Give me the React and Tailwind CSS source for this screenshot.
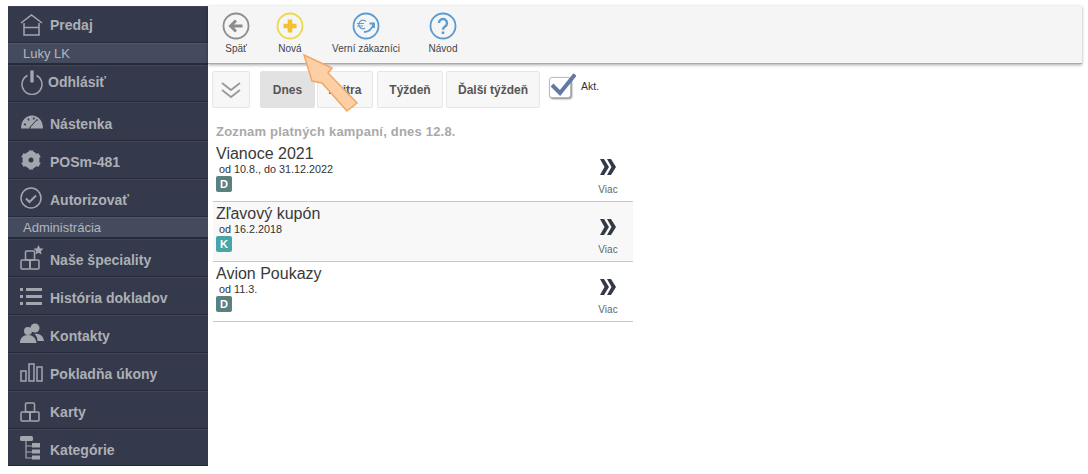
import React from 'react';

const ICON = 'w-[24px] h-[26px] flex-none text-[#a3a6ad]';

const HomeIcon = () => (
    <svg className={ICON} viewBox="0 0 24 26" fill="none" stroke="currentColor" strokeWidth="1.500">
        <path d="M1 11 11.500 3 22 11" />
        <path d="M4 11v12h15V11" />
        <path d="M4 15.500h15" />
    </svg>
);
const PowerIcon = () => (
    <svg className={ICON} viewBox="0 0 24 26" fill="none" stroke="currentColor" strokeWidth="1.500">
        <path d="M7.500 6.500a10 10 0 1 0 9 0" />
        <path d="M12 1.500v12" strokeWidth="3.400" />
    </svg>
);
const GaugeIcon = () => (
    <svg className={ICON} viewBox="0 0 24 26" fill="currentColor">
        <path d="M1 18.500C1 10.500 6 5.500 12 5.500s11 5 11 13z" />
        <path d="M4 14l2 1M8 8.500l1 2M14 7.500l-.5 2M9.500 18.500l8-9" fill="none" stroke="#343a4c" strokeWidth="1.600" />
        <path d="M11 18l6-7" fill="none" stroke="currentColor" strokeWidth="1.400" />
    </svg>
);
const GearIcon = () => (
    <svg className={ICON} viewBox="0 0 24 26">
        <circle cx="11" cy="13" r="5.500" fill="none" stroke="currentColor" strokeWidth="6" />
        <path d="M11 3.500v4M11 18.500v4M2.500 8l4 2.500M15.500 15.500l4 2.500M2.500 18l4-2.500M15.500 10.500l4-2.500" stroke="currentColor" strokeWidth="4.500" />
    </svg>
);
const CheckCircleIcon = () => (
    <svg className={ICON} viewBox="0 0 24 26" fill="none" stroke="currentColor" strokeWidth="1.500">
        <circle cx="11" cy="13" r="10" />
        <path d="M6 13.500l3.500 3.500L16 10.500" strokeWidth="2" />
    </svg>
);
const BoxesIcon = ({ star }) => (
    <svg className={ICON} viewBox="0 0 24 26" fill="none" stroke="currentColor" strokeWidth="1.500">
        <rect x="1" y="15" width="9" height="9" rx="1" />
        <rect x="10" y="15" width="9" height="9" rx="1" />
        <rect x="5.500" y="6" width="9" height="9" rx="1" />
        {star && <path d="M18.500 0l1.500 3.300 3.500.4-2.600 2.400.7 3.500-3.100-1.800-3.100 1.800.7-3.500-2.600-2.400 3.500-.4z" fill="currentColor" stroke="none" />}
    </svg>
);
const ListIcon = () => (
    <svg className={ICON} viewBox="0 0 24 26" fill="currentColor">
        <path d="M0 5h3v3H0zM0 12h3v3H0zM0 19h3v3H0zM6 5h16v3H6zM6 12h16v3H6zM6 19h16v3H6z" />
    </svg>
);
const PeopleIcon = () => (
    <svg className={ICON} viewBox="0 0 24 26" fill="currentColor">
        <circle cx="15" cy="7" r="4.500" />
        <circle cx="8" cy="10" r="4" />
        <path d="M0 22c0-5 3-8 8-8s8 3 8.500 8zM17.500 20c0-3-1-5-3-7 5-1 9 2 9.500 7z" />
    </svg>
);
const BarsIcon = () => (
    <svg className={ICON} viewBox="0 0 24 26" fill="none" stroke="currentColor" strokeWidth="1.500">
        <path d="M1 12h5v10H1zM9 5h5v17H9zM17 8h5v14h-5z" />
    </svg>
);
const TreeIcon = () => (
    <svg className={ICON} viewBox="0 0 24 26" fill="currentColor">
        <rect x="0" y="1" width="13" height="5" rx="1.500" />
        <path d="M6 6v17h6M6 11h6M6 17h6" fill="none" stroke="currentColor" strokeWidth="1.200" />
        <rect x="12" y="8" width="8" height="4.500" />
        <rect x="12" y="14.500" width="8" height="4" />
        <rect x="12" y="20.500" width="8" height="4" />
    </svg>
);

const MENU = [
    { type: 'item', label: 'Predaj', icon: <HomeIcon />, height: 'h-[37px]', textPad: 'pt-[2px]' },
    { type: 'head', label: 'Luky LK' },
    { type: 'item', label: 'Odhlásiť', icon: <PowerIcon />, height: 'h-[37px]', gap: 'gap-[4px] pb-[3px]', textPad: 'pt-0' },
    { type: 'item', label: 'Nástenka', icon: <GaugeIcon />, height: 'h-[39px]', gap: 'gap-[6px] pt-[2px]' },
    { type: 'item', label: 'POSm-481', icon: <GearIcon /> },
    { type: 'item', label: 'Autorizovať', icon: <CheckCircleIcon /> },
    { type: 'head', label: 'Administrácia' },
    { type: 'item', label: 'Naše špeciality', icon: <BoxesIcon star /> },
    { type: 'item', label: 'História dokladov', icon: <ListIcon /> },
    { type: 'item', label: 'Kontakty', icon: <PeopleIcon /> },
    { type: 'item', label: 'Pokladňa úkony', icon: <BarsIcon /> },
    { type: 'item', label: 'Karty', icon: <BoxesIcon /> },
    { type: 'item', label: 'Kategórie', icon: <TreeIcon />, height: 'h-[37px]', textPad: 'pt-[5px]' },
];

const BackIcon = () => (
    <svg className="w-[28px] h-[28px]" viewBox="0 0 28 28" fill="none">
        <circle cx="14" cy="14" r="12.500" stroke="#8d8d8d" strokeWidth="1.800" />
        <path d="M20.500 14H9M14 8.500 8.500 14l5.500 5.500" stroke="#8d8d8d" strokeWidth="3" />
    </svg>
);
const PlusIcon = () => (
    <svg className="w-[28px] h-[28px]" viewBox="0 0 28 28" fill="none">
        <circle cx="14" cy="14" r="12.500" stroke="#ecd94a" strokeWidth="1.800" />
        <path d="M14 7.500v13M7.500 14h13" stroke="#f2c230" strokeWidth="4.500" />
    </svg>
);
const EuroIcon = () => (
    <svg className="w-[28px] h-[28px]" viewBox="0 0 28 28" fill="none" stroke="#5b9bd0">
        <circle cx="14" cy="14" r="12.500" strokeWidth="1.800" />
        <path d="M14 9.500a4 4 0 0 0-6 0 5 5 0 0 0 0 6 4 4 0 0 0 5 .5M5 11.500h7M5 14h6" strokeWidth="1.200" />
        <path d="M12 20c5 0 8-3 9.500-8M17.500 11.500h4.500v4.500" strokeWidth="1.800" />
    </svg>
);
const HelpIcon = () => (
    <svg className="w-[28px] h-[28px]" viewBox="0 0 28 28" fill="none">
        <circle cx="14" cy="14" r="12.500" stroke="#5b9bd0" strokeWidth="1.800" />
        <path d="M10 11a4 4 0 1 1 6 3.500c-1.500 1-2 1.500-2 3.200" stroke="#5b9bd0" strokeWidth="2.400" />
        <path d="M14 19.500v2.500" stroke="#5b9bd0" strokeWidth="2.600" />
    </svg>
);

const TOOLS = [
    { label: 'Späť', icon: <BackIcon />, width: 'w-[56px]' },
    { label: 'Nová', icon: <PlusIcon />, width: 'w-[52px]' },
    { label: 'Verní zákazníci', icon: <EuroIcon />, width: 'w-[100px]' },
    { label: 'Návod', icon: <HelpIcon />, width: 'w-[54px]' },
];

const CAMPAIGNS = [
    { name: 'Vianoce 2021', dates: 'od 10.8., do 31.12.2022', tag: 'D', tagColor: 'bg-[#5a8080]', bg: 'bg-white' },
    { name: 'Zľavový kupón', dates: 'od 16.2.2018', tag: 'K', tagColor: 'bg-[#46a6a6]', bg: 'bg-[#f8f8f8]' },
    { name: 'Avion Poukazy', dates: 'od 11.3.', tag: 'D', tagColor: 'bg-[#5a8080]', bg: 'bg-white' },
];

function MenuRow({ item }) {
    if (item.type === 'head') {
        return (
            <div className="h-[22px] pl-[15px] flex items-center bg-[#454b5e] border-t border-[#525869] border-b-2 border-b-[#272b39] text-[13px] text-[#b4b6bc]">
                {item.label}
            </div>
        );
    }
    return (
        <div className={`${item.height ?? 'h-[38px]'} pl-[12px] flex items-center ${item.gap ?? 'gap-[6px]'} bg-[#343a4c] border-b border-[#272b39] border-t border-t-[#404658] text-[14px] font-bold text-[#adafb5]`}>
            {item.icon}
            <span className={item.textPad ?? 'pt-[4px]'}>{item.label}</span>
        </div>
    );
}

function Tab({ label, active, className }) {
    return (
        <div className={`h-[37px] ${className} flex items-center justify-center rounded-[2px] border text-[12px] font-bold text-[#555] ${active ? 'bg-[#e2e2e2] border-[#e2e2e2]' : 'bg-[#f7f7f7] border-[#e6e6e6]'}`}>
            {label}
        </div>
    );
}

function CampaignRow({ campaign }) {
    return (
        <div className={`h-[60px] flex justify-between pl-[3px] border-b border-[#c8c8c8] ${campaign.bg}`}>
            <div>
                <div className="h-[19px] pt-[2px] text-[16px] leading-[19px] text-[#3a3a3a]">{campaign.name}</div>
                <div className="mt-[1px] pl-[3px] text-[10.800px] leading-[14px] text-[#333]">{campaign.dates}</div>
                <div className={`w-[16px] h-[16px] rounded-[2px] flex items-center justify-center text-[11px] font-bold text-white ${campaign.tagColor}`}>
                    {campaign.tag}
                </div>
            </div>
            <div className="w-[50px] flex flex-col items-center pt-[17px]">
                <svg className="w-[16px] h-[16px] flex-none" viewBox="0 0 16 16" fill="#333a46">
                    <path d="M0 0h4l5 8-5 8H0l4.500-8zM7 0h4l5 8-5 8H7l4.500-8z" />
                </svg>
                <div className="mt-[9px] text-[10px] leading-[12px] text-[#666]">Viac</div>
            </div>
        </div>
    );
}

export default function App() {
    return (
        <div className="relative w-[1088px] h-[474px] overflow-hidden bg-white pt-[6px] pl-[8px] font-['Liberation_Sans',Arial,sans-serif]">
            <div className="flex h-[460px]">
                {/* Sidebar */}
                <div className="w-[200px] flex-none bg-[#343a4c]">
                    {MENU.map(item => <MenuRow key={item.label} item={item} />)}
                </div>

                {/* Main */}
                <div className="flex-1 min-w-0">
                    <div className="h-[58px] bg-[#f5f5f5] border-b border-[#aaa] shadow-[0_1px_3px_rgba(0,0,0,0.35)] flex pt-[6px] w-[874px]">
                        {TOOLS.map(tool => (
                            <div key={tool.label} className={`${tool.width} flex flex-col items-center`}>
                                {tool.icon}
                                <div className="mt-[3px] text-[10px] leading-[12px] text-[#444]">{tool.label}</div>
                            </div>
                        ))}
                    </div>

                    <div className="flex items-start pl-[4px] pt-[7px]">
                        <div className="h-[37px] w-[38px] flex items-center justify-center rounded-[2px] border border-[#e6e6e6] bg-[#f7f7f7]">
                            <svg className="w-[20px] h-[20px]" viewBox="0 0 20 20" fill="none" stroke="#999" strokeWidth="1.800">
                                <path d="M1 3l9 7 9-7M1 10l9 7 9-7" />
                            </svg>
                        </div>
                        <Tab label="Dnes" active className="w-[55px] ml-[10px]" />
                        <Tab label="Zajtra" className="w-[56px] ml-[2px]" />
                        <Tab label="Týždeň" className="w-[66px] ml-[4px]" />
                        <Tab label="Ďalší týždeň" className="w-[94px] ml-[3px]" />
                        <div className="relative w-[28px] h-[26px] ml-[8px] mt-[2px]">
                            <div className="absolute left-[1px] top-[4px] w-[22px] h-[21px] rounded-[3px] bg-white border border-[#bbb] shadow-[1px_1px_2px_rgba(0,0,0,0.5)]" />
                            <svg className="absolute left-0 top-0 w-[28px] h-[26px]" viewBox="0 0 28 26" fill="none">
                                <path d="M4 12l8 8L27 1.500" stroke="#6478a8" strokeWidth="4" />
                            </svg>
                        </div>
                        <div className="ml-[5px] mt-[9px] text-[10.500px] leading-[12px] text-[#333]">Akt.</div>
                    </div>

                    <div className="w-[420px] ml-[5px] mt-[16px]">
                        <div className="h-[18px] pl-[3px] text-[13px] tracking-[0.2px] leading-[16px] font-bold text-[#a9a9a9]">
                            Zoznam platných kampaní, dnes 12.8.
                        </div>
                        {CAMPAIGNS.map(c => <CampaignRow key={c.name} campaign={c} />)}
                    </div>
                </div>
            </div>

            {/* Arrow over toolbar */}
            <svg className="absolute left-[298px] top-[52px] w-[64px] h-[64px]" viewBox="0 0 64 64" fill="none">
                <path d="M6 3l28 13-4 5 29 30-10 8-25-28-10-2z" fill="#fccfa5" stroke="#f0a868" strokeWidth="1.500" />
            </svg>
        </div>
    );
}
